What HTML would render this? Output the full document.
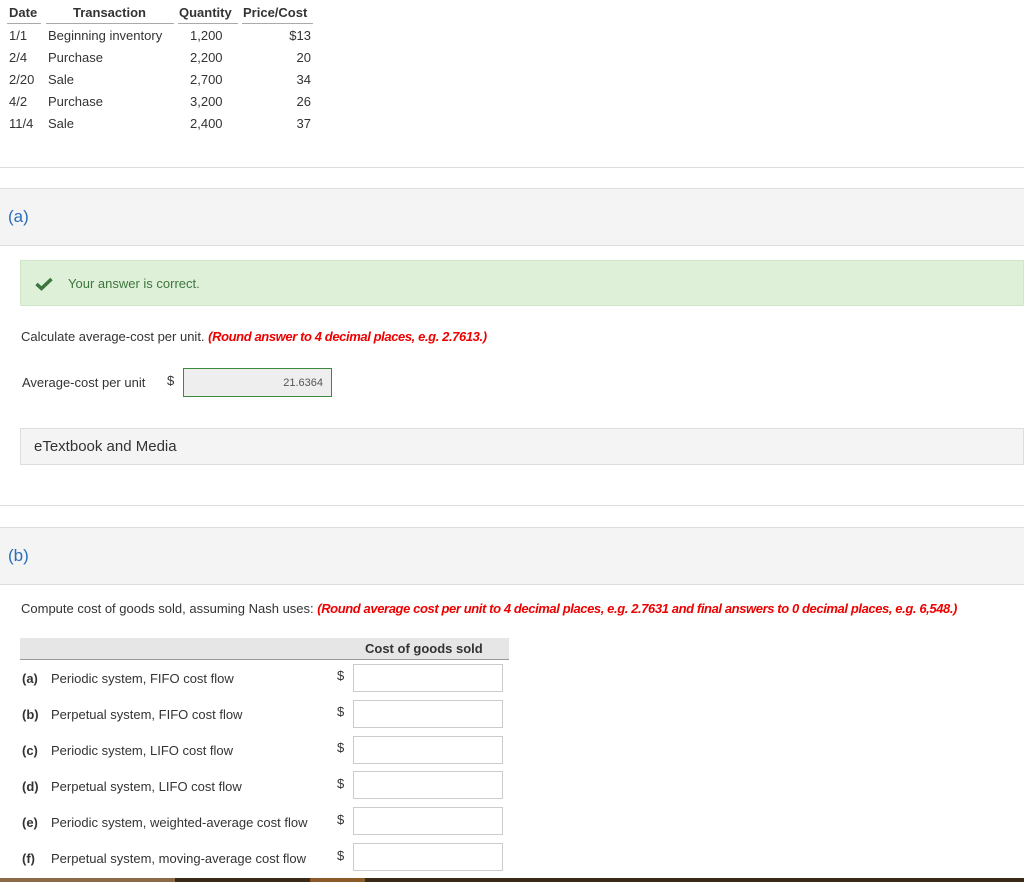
<!DOCTYPE html>
<html><head><meta charset="utf-8"><style>
body{margin:0;width:1024px;height:882px;position:relative;overflow:hidden;background:#fff;font-family:"Liberation Sans",sans-serif;font-size:13px;color:#333}
.a{position:absolute;white-space:nowrap}
.r{text-align:right}
.red{color:#e00;font-style:italic;font-weight:bold;letter-spacing:-0.4px}
.box{position:absolute;background:#fff;border:1px solid #ccc;width:148px;height:26px;left:353px}
</style></head><body>
<div class="a" style="left:9px;top:5px;font-weight:bold">Date</div>
<div class="a" style="left:73px;top:5px;font-weight:bold">Transaction</div>
<div class="a" style="left:179px;top:5px;font-weight:bold">Quantity</div>
<div class="a" style="left:243px;top:5px;font-weight:bold">Price/Cost</div>
<div class="a" style="left:7px;top:23px;width:34px;border-top:1px solid #aaa"></div>
<div class="a" style="left:46px;top:23px;width:128px;border-top:1px solid #aaa"></div>
<div class="a" style="left:178px;top:23px;width:60px;border-top:1px solid #aaa"></div>
<div class="a" style="left:242px;top:23px;width:71px;border-top:1px solid #aaa"></div>
<div class="a" style="left:9px;top:25px;line-height:22px">1/1<br>2/4<br>2/20<br>4/2<br>11/4</div>
<div class="a" style="left:48px;top:25px;line-height:22px">Beginning inventory<br>Purchase<br>Sale<br>Purchase<br>Sale</div>
<div class="a" style="left:190px;top:25px;line-height:22px">1,200<br>2,200<br>2,700<br>3,200<br>2,400</div>
<div class="a r" style="left:250px;width:61px;top:25px;line-height:22px">$13<br>20<br>34<br>26<br>37</div>
<div class="a" style="left:0;top:167px;width:1024px;border-top:1px solid #ddd"></div>
<div class="a" style="left:0;top:188px;width:1024px;height:56px;background:#f4f4f4;border-top:1px solid #ddd;border-bottom:1px solid #ddd"></div>
<div class="a" style="left:8px;top:207px;font-size:17px;color:#2a6ebb">(a)</div>
<div class="a" style="left:20px;top:260px;width:1004px;height:46px;background:#dff0d8;border:1px solid #d0e6c8;box-sizing:border-box"></div>
<svg class="a" style="left:35px;top:277px" width="18" height="14" viewBox="0 0 18 14"><path d="M1.5 7 L6.5 11.5 L16.5 2" fill="none" stroke="#3c763d" stroke-width="3.5"/></svg>
<div class="a" style="left:68px;top:276px;color:#3c763d">Your answer is correct.</div>
<div class="a" style="left:21px;top:329px">Calculate average-cost per unit. <span class="red">(Round answer to 4 decimal places, e.g. 2.7613.)</span></div>
<div class="a" style="left:22px;top:375px">Average-cost per unit</div>
<div class="a" style="left:167px;top:373px">$</div>
<div class="a r" style="left:183px;top:368px;width:149px;height:29px;box-sizing:border-box;background:#eee;border:1px solid #3c8a3c;font-size:11px;color:#555;padding:8px 8px 0 0">21.6364</div>
<div class="a" style="left:20px;top:428px;width:1004px;height:37px;box-sizing:border-box;background:#f4f4f4;border:1px solid #ddd"></div>
<div class="a" style="left:34px;top:438px;font-size:15px;color:#333">eTextbook and Media</div>
<div class="a" style="left:0;top:505px;width:1024px;border-top:1px solid #ddd"></div>
<div class="a" style="left:0;top:527px;width:1024px;height:56px;background:#f4f4f4;border-top:1px solid #ddd;border-bottom:1px solid #ddd"></div>
<div class="a" style="left:8px;top:546px;font-size:17px;color:#2a6ebb">(b)</div>
<div class="a" style="left:21px;top:601px">Compute cost of goods sold, assuming Nash uses: <span class="red">(Round average cost per unit to 4 decimal places, e.g. 2.7631 and final answers to 0 decimal places, e.g. 6,548.)</span></div>
<div class="a" style="left:20px;top:638px;width:489px;height:21px;background:#e6e6e6;border-bottom:1px solid #999"></div>
<div class="a" style="left:365px;top:641px;font-weight:bold;color:#333">Cost of goods sold</div>
<div class="a" style="left:22px;top:661px;line-height:36px"><b>(a)</b><br><b>(b)</b><br><b>(c)</b><br><b>(d)</b><br><b>(e)</b><br><b>(f)</b></div>
<div class="a" style="left:51px;top:661px;line-height:36px">Periodic system, FIFO cost flow<br>Perpetual system, FIFO cost flow<br>Periodic system, LIFO cost flow<br>Perpetual system, LIFO cost flow<br>Periodic system, weighted-average cost flow<br>Perpetual system, moving-average cost flow</div>
<div class="a" style="left:337px;top:658px;line-height:36px">$<br>$<br>$<br>$<br>$<br>$</div>
<div class="box" style="top:664px"></div>
<div class="box" style="top:700px"></div>
<div class="box" style="top:736px"></div>
<div class="box" style="top:771px"></div>
<div class="box" style="top:807px"></div>
<div class="box" style="top:843px"></div>
<div class="a" style="left:0;top:878px;width:1024px;height:4px;background:#3a2a1a"></div>
<div class="a" style="left:0;top:878px;width:175px;height:4px;background:#8a6a48"></div>
<div class="a" style="left:310px;top:878px;width:55px;height:4px;background:#8a5a28"></div>
</body></html>
